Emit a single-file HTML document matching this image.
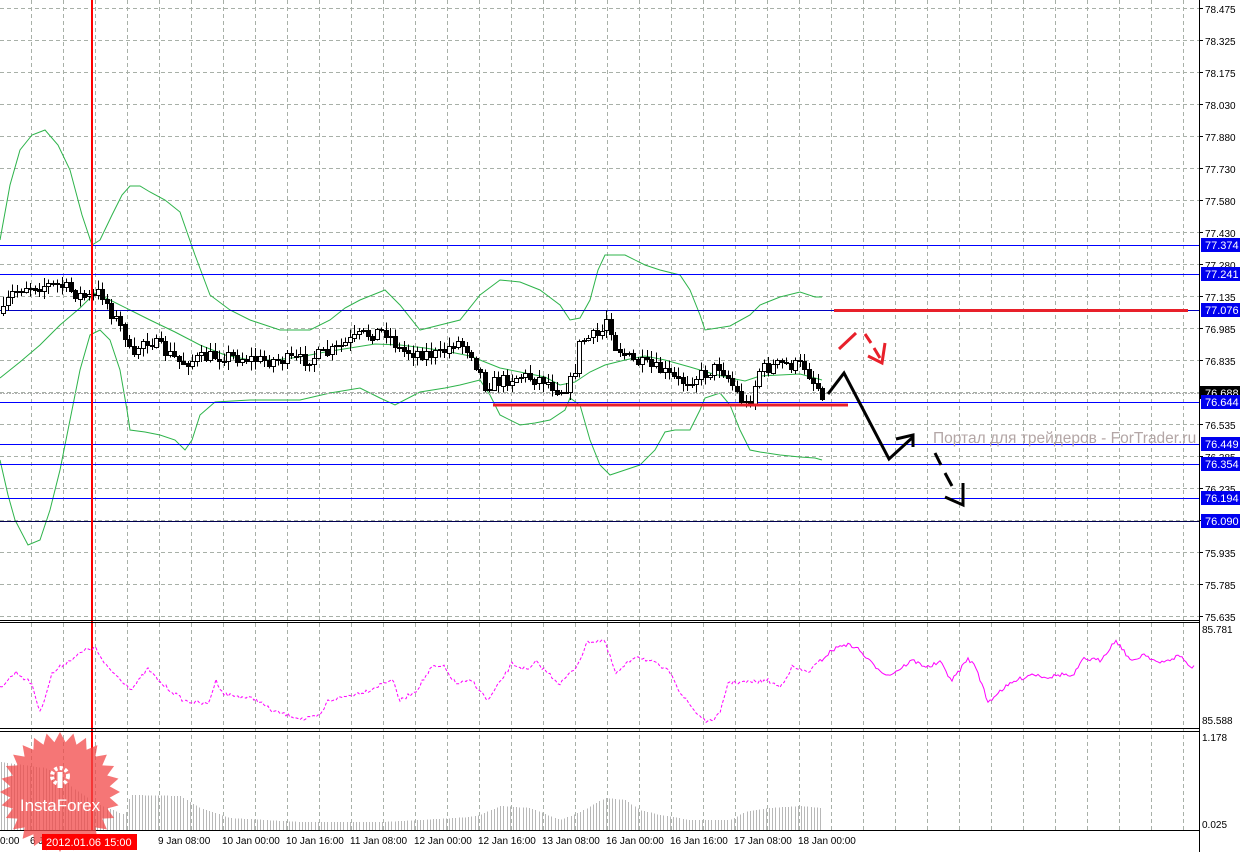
<!DOCTYPE html>
<html><head><meta charset="utf-8">
<style>
html,body{margin:0;padding:0;background:#fff;width:1249px;height:852px;overflow:hidden}
svg{display:block}
text{font-family:"Liberation Sans",Tahoma,sans-serif}
.ax{font-size:10px;fill:#000}
.lb{font-size:11px;fill:#fff}
.h{shape-rendering:crispEdges}
</style></head><body>
<svg id="s" width="1249" height="852" xmlns="http://www.w3.org/2000/svg">
<rect width="1249" height="852" fill="#fff"/>
<g id="grid" class="h"></g>
<g id="vol" class="h"></g>
<polyline fill="none" stroke="#2db34a" stroke-width="1" points="0,240 10,185 20,150 32,135 45,130 58,145 70,170 82,215 92,245 100,240 112,215 122,195 130,186 140,186 150,192 165,200 180,212 195,255 210,295 230,310 250,320 280,330 310,330 330,320 345,308 360,300 385,290 400,305 420,330 440,325 460,320 480,295 500,280 520,282 540,290 560,305 570,320 580,318 590,300 598,270 605,255 625,255 645,265 660,270 680,275 690,290 700,315 705,330 730,326 750,315 760,305 780,297 800,292 815,297 822,297"/>
<polyline fill="none" stroke="#2db34a" stroke-width="1" points="0,460 8,495 15,520 28,545 40,540 50,510 60,470 70,420 80,370 90,335 100,330 110,340 120,370 127,410 130,430 145,432 160,435 175,440 185,450 192,440 200,415 215,402 250,400 300,400 330,393 360,388 380,398 395,405 420,392 445,388 460,385 480,380 490,395 500,415 520,425 535,423 550,420 565,410 570,398 580,405 590,440 600,465 610,475 625,470 640,465 655,450 665,432 675,430 690,430 700,410 705,398 720,393 730,405 740,430 750,450 760,452 780,455 800,457 815,458 822,460"/>
<polyline fill="none" stroke="#2db34a" stroke-width="1" points="0,378 20,362 40,345 60,325 80,308 95,293 110,300 130,310 150,320 175,332 200,345 225,355 250,360 275,360 300,357 325,352 350,348 375,344 400,345 425,348 450,352 470,356 480,360 500,368 520,372 545,377 560,385 575,382 590,372 605,365 625,360 645,356 665,360 690,367 710,373 730,378 745,381 760,376 780,375 800,374 815,378 822,380"/>
<g class="h">
<line x1="0" y1="245.5" x2="1199" y2="245.5" stroke="#0000ff" stroke-width="1"/>
<line x1="0" y1="274.5" x2="1199" y2="274.5" stroke="#0000ff" stroke-width="1"/>
<line x1="0" y1="310.5" x2="1199" y2="310.5" stroke="#0000c0" stroke-width="1"/>
<line x1="0" y1="393.5" x2="1199" y2="393.5" stroke="#b0b0b0" stroke-width="1" stroke-dasharray="2,1"/>
<line x1="0" y1="402.5" x2="1199" y2="402.5" stroke="#0000ff" stroke-width="1"/>
<line x1="0" y1="444.5" x2="1199" y2="444.5" stroke="#0000ff" stroke-width="1"/>
<line x1="0" y1="464.5" x2="1199" y2="464.5" stroke="#0000ff" stroke-width="1"/>
<line x1="0" y1="498.5" x2="1199" y2="498.5" stroke="#0000ff" stroke-width="1"/>
<line x1="0" y1="521.5" x2="1199" y2="521.5" stroke="#000050" stroke-width="1"/>
</g>
<g id="candles"></g>
<rect x="91" y="0" width="2" height="831" fill="#ff0000"/>
<g class="h">
<line x1="834" y1="310.5" x2="1188" y2="310.5" stroke="#e8202a" stroke-width="3"/>
<line x1="493" y1="405" x2="848" y2="405" stroke="#e8202a" stroke-width="3"/>
</g>
<g stroke="#e8202a" stroke-width="3" fill="none">
<line x1="839" y1="349" x2="856" y2="333"/>
<line x1="865" y1="334" x2="871" y2="343"/><line x1="874" y1="348" x2="880" y2="358"/>
<polyline points="868,356 882,363 885,343"/>
</g>
<g stroke="#000" stroke-width="3" fill="none" stroke-linejoin="miter">
<polyline points="828,394 844,373 889,459 913,437"/>
<polyline points="896,439 913,435 913,447"/>
<line x1="935" y1="453" x2="941" y2="465"/><line x1="945" y1="473" x2="952" y2="486"/>
<polyline points="945,497 963,505 963,483"/>
</g>
<text x="933" y="443" font-size="15.5" fill="#b3a6a6">Портал для трейдеров - ForTrader.ru</text>
<g class="h">
<line x1="0" y1="620.5" x2="1199" y2="620.5" stroke="#000"/>
<line x1="0" y1="622.5" x2="1199" y2="622.5" stroke="#000"/>
<line x1="0" y1="728.5" x2="1199" y2="728.5" stroke="#000"/>
<line x1="0" y1="731.5" x2="1199" y2="731.5" stroke="#000"/>
<line x1="0" y1="830.5" x2="1199" y2="830.5" stroke="#000"/>
<line x1="1199.5" y1="0" x2="1199.5" y2="852" stroke="#000"/>
</g>
<g id="rsi"></g>
<g class="ax">
<text x="1205" y="13">78.475</text><text x="1205" y="45">78.325</text><text x="1205" y="77">78.175</text>
<text x="1205" y="109">78.030</text><text x="1205" y="141">77.880</text><text x="1205" y="173">77.730</text>
<text x="1205" y="205">77.580</text><text x="1205" y="237">77.430</text><text x="1205" y="269">77.280</text>
<text x="1205" y="301">77.135</text><text x="1205" y="333">76.985</text><text x="1205" y="365">76.835</text>
<text x="1205" y="429">76.535</text><text x="1205" y="461">76.385</text><text x="1205" y="493">76.235</text>
<text x="1205" y="557">75.935</text><text x="1205" y="589">75.785</text><text x="1205" y="621">75.635</text>
<text x="1202" y="633">85.781</text><text x="1202" y="724">85.588</text>
<text x="1202" y="741">1.178</text><text x="1202" y="828">0.025</text>
</g>
<rect x="1200" y="386" width="40" height="13" fill="#000"/><text class="lb" x="1205" y="397" font-size="10">76.688</text>
<rect x="1201" y="238" width="39" height="14" fill="#00e"/><text class="lb" x="1205" y="249">77.374</text>
<rect x="1201" y="267" width="39" height="14" fill="#00e"/><text class="lb" x="1205" y="278">77.241</text>
<rect x="1201" y="303" width="39" height="14" fill="#00e"/><text class="lb" x="1205" y="314">77.076</text>
<rect x="1201" y="395" width="39" height="14" fill="#00e"/><text class="lb" x="1205" y="406">76.644</text>
<rect x="1201" y="437" width="39" height="14" fill="#00e"/><text class="lb" x="1205" y="448">76.449</text>
<rect x="1201" y="457" width="39" height="14" fill="#00e"/><text class="lb" x="1205" y="468">76.354</text>
<rect x="1201" y="491" width="39" height="14" fill="#00e"/><text class="lb" x="1205" y="502">76.194</text>
<rect x="1201" y="514" width="39" height="14" fill="#00e"/><text class="lb" x="1205" y="525">76.090</text>
<g class="ax">
<text x="0" y="844">0:00</text><text x="30" y="844">6 J</text>
<text x="158" y="844">9 Jan 08:00</text><text x="222" y="844">10 Jan 00:00</text><text x="286" y="844">10 Jan 16:00</text>
<text x="350" y="844">11 Jan 08:00</text><text x="414" y="844">12 Jan 00:00</text><text x="478" y="844">12 Jan 16:00</text>
<text x="542" y="844">13 Jan 08:00</text><text x="606" y="844">16 Jan 00:00</text><text x="670" y="844">16 Jan 16:00</text>
<text x="734" y="844">17 Jan 08:00</text><text x="798" y="844">18 Jan 00:00</text>
</g>
<g opacity="0.75">
<polygon id="star" fill="#f24848"/>
</g>
<rect x="42" y="834" width="95" height="16" fill="#f00"/>
<text x="46" y="846" font-size="11" fill="#fff">2012.01.06 15:00</text>
<g fill="#fff">
<circle cx="60" cy="776" r="8" fill="none" stroke="#fff" stroke-width="4" stroke-dasharray="3,2.3"/>
<rect x="57.5" y="772" width="5" height="16"/>
</g>
<text x="60" y="811" font-size="17" fill="#fff" text-anchor="middle">InstaForex</text>
</svg>
<script>
(function(){
var NS="http://www.w3.org/2000/svg";
function el(p,t,a){var e=document.createElementNS(NS,t);for(var k in a)e.setAttribute(k,a[k]);p.appendChild(e);return e;}
var seed=7;function rnd(){seed=(seed*16807)%2147483647;return seed/2147483647;}
var g=document.getElementById('grid');
for(var x=31;x<1199;x+=32)el(g,'line',{x1:x+.5,y1:0,x2:x+.5,y2:830,stroke:'#a8b0a8','stroke-dasharray':'4,3','stroke-width':1});
for(var y=8;y<620;y+=32)el(g,'line',{x1:0,y1:y+.5,x2:1199,y2:y+.5,stroke:'#a8b0a8','stroke-dasharray':'4,3','stroke-width':1});
for(var y=8;y<620;y+=32)el(g,'line',{x1:1199,y1:y+.5,x2:1203,y2:y+.5,stroke:'#000'});
function interp(pts,x){for(var i=0;i<pts.length-1;i++){if(x<=pts[i+1][0]){var a=pts[i],b=pts[i+1];return a[1]+(b[1]-a[1])*(x-a[0])/(b[0]-a[0]);}}return pts[pts.length-1][1];}
var path=[[0,320],[10,295],[25,285],[60,285],[80,295],[92,298],[100,290],[110,310],[125,335],[132,365],[140,340],[150,340],[180,362],[220,355],[260,360],[300,360],[330,352],[360,335],[385,330],[400,350],[440,355],[455,340],[470,350],[485,385],[520,375],[545,380],[560,390],[572,380],[580,340],[600,335],[607,315],[615,345],[630,360],[660,370],[680,382],[700,375],[720,365],[735,390],[745,405],[752,395],[758,370],[780,364],[805,366],[812,380],[822,392]];
var c=document.getElementById('candles');var prev=interp(path,3);
for(var x=3;x<=822;x+=4.5){var xi=Math.round(x);var t=interp(path,x);var o=prev;var cl=t+(rnd()-.5)*14;var hi=Math.min(o,cl)-1-rnd()*8;var lo=Math.max(o,cl)+1+rnd()*8;
el(c,'line',{x1:xi+.5,y1:hi,x2:xi+.5,y2:lo,stroke:'#000','shape-rendering':'crispEdges'});
var top=Math.round(Math.min(o,cl))+.5,h=Math.max(1,Math.round(Math.abs(o-cl)));
el(c,'rect',{x:xi-1.5,y:top,width:4,height:h,fill:(cl<o?'#fff':'#000'),stroke:'#000','stroke-width':1,'shape-rendering':'crispEdges'});prev=cl;}
var vp=[[0,762],[45,768],[60,775],[75,790],[100,805],[125,815],[130,795],[180,796],[200,808],[230,818],[300,822],[380,822],[420,820],[470,817],[480,815],[500,806],[530,808],[560,820],[580,812],[605,798],[625,800],[640,810],[660,815],[690,820],[730,820],[745,812],[770,808],[800,806],[822,808]];
var v=document.getElementById('vol');
for(var x=1;x<=822;x+=3.2){var xi=Math.round(x)+.5;el(v,'line',{x1:xi,y1:interp(vp,x),x2:xi,y2:830,stroke:'#b8b8b8','stroke-width':1});}
var rp=[[0,200],[20,155],[40,190],[50,275],[65,160],[80,130],[110,85],[120,85],[130,130],[150,175],[165,205],[185,145],[200,185],[230,240],[260,250],[270,180],[280,220],[320,235],[340,270],[380,295],[400,285],[410,240],[460,210],[490,175],[500,240],[520,210],[540,140],[555,140],[570,190],[590,180],[610,240],[640,130],[660,150],[670,125],[700,190],[720,140],[735,65],[755,60],[770,160],[795,105],[820,130],[840,160],[850,215],[870,275],[885,305],[900,280],[910,185],[935,185],[960,180],[975,200],[990,140],[1010,155],[1040,90],[1055,72],[1070,80],[1090,130],[1110,165],[1125,145],[1140,120],[1160,140],[1175,125],[1190,180],[1210,115],[1220,140],[1235,245],[1250,210],[1270,180],[1290,160],[1310,170],[1330,160],[1340,170],[1355,115],[1375,120],[1395,60],[1415,125],[1430,100],[1450,130],[1475,105],[1490,145],[1505,115]];
var rr=rp.map(function(p){return [p[0]/1.25,p[1]];});
var d1='',d2='';
for(var x=0;x<=1195;x+=2){var y=620+interp(rr,x)/2.97+(rnd()-.5)*4;
var pt=x+','+y.toFixed(1)+' ';
if(x<=820)d1+=(d1===''?'M':'L')+pt;
if(x>=820)d2+=(d2===''?'M':'L')+pt;}
var r=document.getElementById('rsi');
el(r,'path',{d:d1,fill:'none',stroke:'#ff00ff','stroke-width':1,'stroke-dasharray':'3,2'});
el(r,'path',{d:d2,fill:'none',stroke:'#ff00ff','stroke-width':1});
var pts=[],n=28;for(var i=0;i<2*n;i++){var a=Math.PI*i/n;var q=(i%2?50:60);pts.push((60+q*Math.cos(a)).toFixed(1)+','+(792+q*Math.sin(a)).toFixed(1));}
document.getElementById('star').setAttribute('points',pts.join(' '));
})();
</script>
</body></html>
